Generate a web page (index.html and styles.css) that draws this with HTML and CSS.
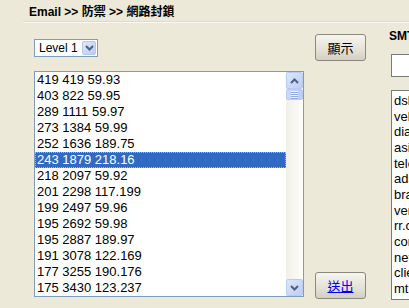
FILE: index.html
```html
<!DOCTYPE html>
<html lang="zh-Hant">
<head>
    <meta charset="UTF-8">
    <title>網路封鎖</title>
    <link rel="stylesheet" href="styles.css">
</head>
<body>
<div class="page">
    <div class="crumb">Email &gt;&gt; 防禦 &gt;&gt; 網路封鎖</div>

    <div class="panel">
        <div class="col-list">
            <div class="level-select">
                <span class="level-value">Level 1</span>
                <span class="drop-btn">
                    <svg width="9" height="6" viewBox="0 0 9 6"><polyline points="1,1 4.5,4.5 8,1" fill="none" stroke="#4d6185" stroke-width="2"/></svg>
                </span>
            </div>

            <div class="listbox">
                <div class="list-rows">
                    <div class="row">419 419 59.93</div>
                    <div class="row">403 822 59.95</div>
                    <div class="row">289 1111 59.97</div>
                    <div class="row">273 1384 59.99</div>
                    <div class="row">252 1636 189.75</div>
                    <div class="row selected">243 1879 218.16</div>
                    <div class="row">218 2097 59.92</div>
                    <div class="row">201 2298 117.199</div>
                    <div class="row">199 2497 59.96</div>
                    <div class="row">195 2692 59.98</div>
                    <div class="row">195 2887 189.97</div>
                    <div class="row">191 3078 122.169</div>
                    <div class="row">177 3255 190.176</div>
                    <div class="row">175 3430 123.237</div>
                </div>
                <div class="vscroll">
                    <div class="sb-btn">
                        <svg width="9" height="6" viewBox="0 0 9 6"><polyline points="1,5 4.5,1.5 8,5" fill="none" stroke="#4d6185" stroke-width="2"/></svg>
                    </div>
                    <div class="sb-thumb">
                        <span></span><span></span><span></span><span></span>
                    </div>
                    <div class="sb-track"></div>
                    <div class="sb-btn">
                        <svg width="9" height="6" viewBox="0 0 9 6"><polyline points="1,1 4.5,4.5 8,1" fill="none" stroke="#4d6185" stroke-width="2"/></svg>
                    </div>
                </div>
            </div>
        </div>

        <div class="col-actions">
            <button class="xp-btn">顯示</button>
            <a class="xp-btn send" href="#">送出</a>
        </div>

        <div class="col-smtp">
            <div class="smtp-label">SMTP 伺服器關鍵字</div>
            <div class="smtp-input"></div>
            <div class="domain-list">
                <div>dsl</div>
                <div>velocity</div>
                <div>dialup</div>
                <div>asianet</div>
                <div>telesp</div>
                <div>adsl</div>
                <div>brasiltelecom</div>
                <div>verizon</div>
                <div>rr.com</div>
                <div>comcast</div>
                <div>netvigator</div>
                <div>client</div>
                <div>mtnl</div>
            </div>
        </div>
    </div>
</div>
</body>
</html>
```

FILE: styles.css
```css
body {
    margin: 0;
    background: #ece9d8;
    font-family: "Liberation Sans", Arial, "Noto Sans CJK TC", sans-serif;
    font-size: 13px;
    color: #000;
    overflow: hidden;
}
.page {
    width: 409px;
    height: 308px;
    overflow: hidden;
}
.crumb {
    height: 20px;
    margin-left: 23px;
    padding: 2px 0 0 6px;
    font-size: 12px;
    font-weight: bold;
    line-height: 20px;
    white-space: nowrap;
    border-bottom: 1px solid #fbfaf5;
    box-shadow: 0 -1px 0 #dedbcc inset;
}
.panel {
    display: flex;
    padding-left: 34px;
}
.col-list {
    flex: none;
    width: 270px;
    padding-top: 16px;
}
.level-select {
    width: 64px;
    height: 18px;
    box-sizing: border-box;
    border: 1px solid #7f9db9;
    background: #fff;
    display: flex;
    align-items: center;
}
.level-value {
    padding-left: 4px;
    font-size: 12px;
    line-height: 16px;
}
.drop-btn {
    margin-left: auto;
    margin-right: 1px;
    width: 14px;
    height: 14px;
    box-sizing: border-box;
    border: 1px solid #b5c8f2;
    border-radius: 2px;
    background: linear-gradient(135deg, #e0e8fd, #b9cbf3);
    display: flex;
    align-items: center;
    justify-content: center;
}
.listbox {
    margin-top: 14px;
    height: 226px;
    box-sizing: border-box;
    border: 1px solid #7f9db9;
    background: #fff;
    display: flex;
}
.list-rows {
    flex: 1;
}
.row {
    height: 16px;
    line-height: 16px;
    padding-left: 2px;
    white-space: nowrap;
}
.row.selected {
    background: #316ac5;
    color: #fff;
    outline: 1px dotted #9fb6e0;
    outline-offset: -1px;
}
.vscroll {
    width: 17px;
    display: flex;
    flex-direction: column;
    background: linear-gradient(90deg, #f1efe8, #fdfdfa);
}
.sb-btn {
    height: 17px;
    box-sizing: border-box;
    border: 1px solid #b8cbf4;
    border-radius: 2px;
    background: linear-gradient(135deg, #dde6fd, #bccdf4);
    display: flex;
    align-items: center;
    justify-content: center;
}
.sb-thumb {
    height: 11px;
    box-sizing: border-box;
    border: 1px solid #b8cbf4;
    border-radius: 2px;
    background: linear-gradient(90deg, #cbd9fb, #bccdf4);
    display: flex;
    flex-direction: column;
    align-items: center;
    justify-content: center;
    gap: 1px;
}
.sb-thumb span {
    width: 7px;
    height: 1px;
    background: #eef3fe;
    box-shadow: 0 1px 0 #8faae6;
}
.sb-track {
    flex: 1;
}
.col-actions {
    flex: none;
    width: 51px;
    margin-left: 11px;
    padding: 11px 0 1px;
    display: flex;
    flex-direction: column;
}
.xp-btn {
    height: 27px;
    box-sizing: border-box;
    border: 1px solid #8b897d;
    border-radius: 3px;
    background: linear-gradient(#f6f5ef, #e4e1d6 60%, #d3cfc1);
    font-family: inherit;
    font-size: 13px;
    color: #000;
    padding: 0;
    display: flex;
    align-items: center;
    justify-content: center;
}
.xp-btn.send {
    margin-top: auto;
    color: #0000ee;
    text-decoration: underline;
}
.col-smtp {
    flex: none;
    width: 200px;
    margin-left: 23px;
}
.smtp-label {
    margin-top: 6px;
    font-size: 12px;
    font-weight: bold;
    line-height: 15px;
    white-space: nowrap;
}
.smtp-input {
    margin: 10px 0 0 2px;
    width: 150px;
    height: 23px;
    box-sizing: border-box;
    border: 1px solid #7b7b7b;
    background: #fff;
}
.domain-list {
    margin: 13px 0 0 2px;
    width: 170px;
    height: 210px;
    box-sizing: border-box;
    border: 1px solid #7b7b7b;
    background: #fff;
    padding: 2px;
    line-height: 15.67px;
    white-space: nowrap;
    overflow: hidden;
}
```
